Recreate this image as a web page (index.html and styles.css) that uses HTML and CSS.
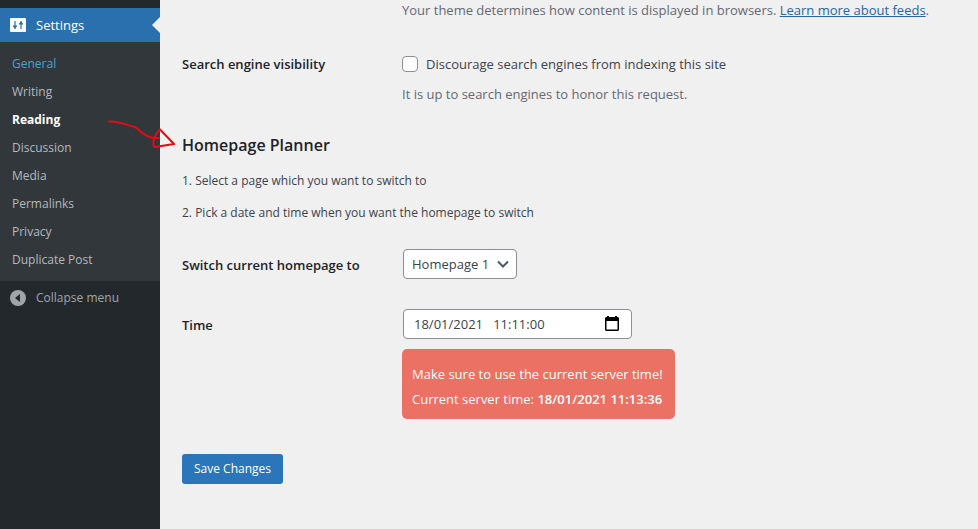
FILE: index.html
```html
<!DOCTYPE html>
<html lang="en">
<head>
<meta charset="utf-8">
<title>Reading Settings</title>
<link rel="stylesheet" href="styles.css">
</head>
<body>
<div class="layout">
  <nav class="sidebar">
    <a class="menu-top" href="#settings">
      <svg class="menu-icon" viewBox="0 0 16 16" aria-hidden="true">
        <rect width="16" height="14" y="1" rx="1" fill="#fff"/>
        <path d="M5 4v8M11 4v8" stroke="#2a70ae" stroke-width="1.200"/>
        <path d="M3 8.500h4v1L5 11.500 3 9.500zM9 6.500L11 4.500l2 2v1H9z" fill="#2a70ae"/>
      </svg>
      <span>Settings</span>
    </a>
    <ul class="submenu">
      <li><a class="hovered" href="#general">General</a></li>
      <li><a href="#writing">Writing</a></li>
      <li><a class="current" href="#reading">Reading</a></li>
      <li><a href="#discussion">Discussion</a></li>
      <li><a href="#media">Media</a></li>
      <li><a href="#permalinks">Permalinks</a></li>
      <li><a href="#privacy">Privacy</a></li>
      <li><a href="#duplicate">Duplicate Post</a></li>
    </ul>
    <button class="collapse" type="button">
      <svg class="menu-icon" viewBox="0 0 16 16" aria-hidden="true">
        <circle cx="8" cy="8" r="8" fill="#a0a5aa"/>
        <path d="M10 4v8L5 8z" fill="#23282d"/>
      </svg>
      <span>Collapse menu</span>
    </button>
  </nav>

  <main class="content">
    <form>
      <div class="row">
        <div></div>
        <p class="description">Your theme determines how content is displayed in browsers. <a href="#feeds">Learn more about feeds</a>.</p>
      </div>
      <div class="row">
        <div class="row-title">Search engine visibility</div>
        <div>
          <label class="check"><input type="checkbox">Discourage search engines from indexing this site</label>
          <p class="description">It is up to search engines to honor this request.</p>
        </div>
      </div>

      <h2>Homepage Planner</h2>
      <p class="step">1. Select a page which you want to switch to</p>
      <p class="step">2. Pick a date and time when you want the homepage to switch</p>

      <div class="row fields">
        <label class="row-title" for="page">Switch current homepage to</label>
        <div class="select-wrap">
          <select id="page"><option>Homepage 1</option></select>
          <svg class="chevron" viewBox="0 0 12 8" aria-hidden="true"><path d="M1 1.500l5 5 5-5" fill="none" stroke="#50575e" stroke-width="2"/></svg>
        </div>
      </div>
      <div class="row fields">
        <label class="row-title" for="time">Time</label>
        <div>
          <div class="date-wrap">
            <input id="time" type="text" value="18/01/2021   11:11:00">
            <svg class="calendar" viewBox="0 0 14 15" aria-hidden="true"><path fill="#000" fill-rule="evenodd" d="M2 0h2v1h6V0h2v1h1l1 1v12l-1 1H1l-1-1V2l1-1h1zM1.500 5v8.500h11V5z"/></svg>
          </div>
          <div class="notice">
            <p>Make sure to use the current server time!</p>
            <p>Current server time: <strong>18/01/2021 11:13:36</strong></p>
          </div>
        </div>
      </div>
      <button class="save" type="submit">Save Changes</button>
    </form>
  </main>

  <svg class="pointer" viewBox="0 0 70 36" aria-hidden="true">
    <path d="M2 5.500C12 5 19 9 28 11C33 14 34 19 46 22L52 22M53 13.500L67 28L48 31C45 30 46 20 53 13.500" fill="none" stroke="#e60a12" stroke-width="2" stroke-linecap="round" stroke-linejoin="round"/>
  </svg>
</div>
</body>
</html>
```
FILE: styles.css
```css
* {
  box-sizing: border-box;
}

body {
  margin: 0;
  background: #f0f0f1;
  color: #3c434a;
  font: 13px/20px "Open Sans", "Noto Sans", sans-serif;
}

p, h2, ul {
  margin: 0;
  padding: 0;
}

input, select, button {
  font: inherit;
}

.layout {
  position: relative;
  display: grid;
  grid-template-columns: 160px minmax(0, 1fr);
  min-height: 100vh;
}

.sidebar {
  padding-top: 8px;
  background: #23282d;
}

.menu-top, .collapse {
  display: flex;
  align-items: center;
  gap: 10px;
  width: 100%;
  height: 34px;
  padding: 0 10px;
  border: 0;
  background: none;
  color: #a0a5aa;
  text-decoration: none;
}

.collapse {
  font-size: 12px;
}

.menu-top {
  position: relative;
  background: #2a70ae;
  color: #fff;
}

.menu-top::after {
  content: "";
  position: absolute;
  right: 0;
  top: 9px;
  border: 8px solid transparent;
  border-left: 0;
  border-right-color: #f0f0f1;
}

.menu-icon {
  width: 16px;
  height: 16px;
}

.submenu {
  padding: 8px 0 7px;
  background: #32373c;
  list-style: none;
  font-size: 12px;
}

.submenu a {
  display: block;
  padding: 4px 12px;
  color: #b4b9be;
  text-decoration: none;
}

.submenu .hovered {
  color: #4aa3cc;
}

.submenu .current {
  color: #fff;
  font-weight: 700;
}

.content {
  padding: 0 22px;
}

.row {
  display: grid;
  grid-template-columns: 220px minmax(0, 1fr);
  margin-bottom: 34px;
}

.row + .row {
  margin-bottom: 31px;
}

.row-title {
  color: #1d2327;
  font-weight: 600;
}

.description {
  color: #646970;
}

.description a {
  color: #2a64a5;
}

.check {
  display: flex;
  align-items: center;
  gap: 8px;
  margin-bottom: 10px;
}

.check input {
  appearance: none;
  width: 16px;
  height: 16px;
  margin: 0;
  border: 1px solid #8c8f94;
  border-radius: 4px;
  background: #fff;
}

h2 {
  margin-bottom: 16px;
  color: #1d2327;
  font-size: 16px;
  font-weight: 600;
}

.step {
  margin-bottom: 12px;
  font-size: 12px;
}

.fields {
  margin: 26px 0 30px;
}

.fields + .fields {
  margin: 0 0 35px;
}

.fields .row-title {
  padding-top: 6px;
}

.select-wrap, .date-wrap {
  position: relative;
  width: fit-content;
  margin-left: 1px;
}

.select-wrap select, .date-wrap input {
  display: block;
  height: 30px;
  border: 1px solid #8c8f94;
  border-radius: 4px;
  background: #fff;
  color: #3c434a;
}

.select-wrap select {
  appearance: none;
  width: 114px;
  padding: 0 24px 0 8px;
}

.date-wrap input {
  width: 229px;
  padding: 0 32px 0 10px;
  white-space: pre;
}

.chevron {
  position: absolute;
  right: 8px;
  top: 11px;
  width: 12px;
  height: 8px;
}

.calendar {
  position: absolute;
  right: 13px;
  top: 7px;
  width: 14px;
  height: 15px;
}

.notice {
  width: fit-content;
  margin-top: 10px;
  padding: 13px 12px 7px 10px;
  border-radius: 5px;
  background: #ea7163;
  color: #fff;
  line-height: 25px;
}

.notice strong {
  font-weight: 600;
}

.save {
  height: 30px;
  padding: 0 12px;
  border: 0;
  border-radius: 3px;
  background: #2b75bb;
  color: #fff;
  font-size: 12px;
}

.pointer {
  position: absolute;
  left: 107px;
  top: 116px;
  width: 70px;
  height: 36px;
}
```
